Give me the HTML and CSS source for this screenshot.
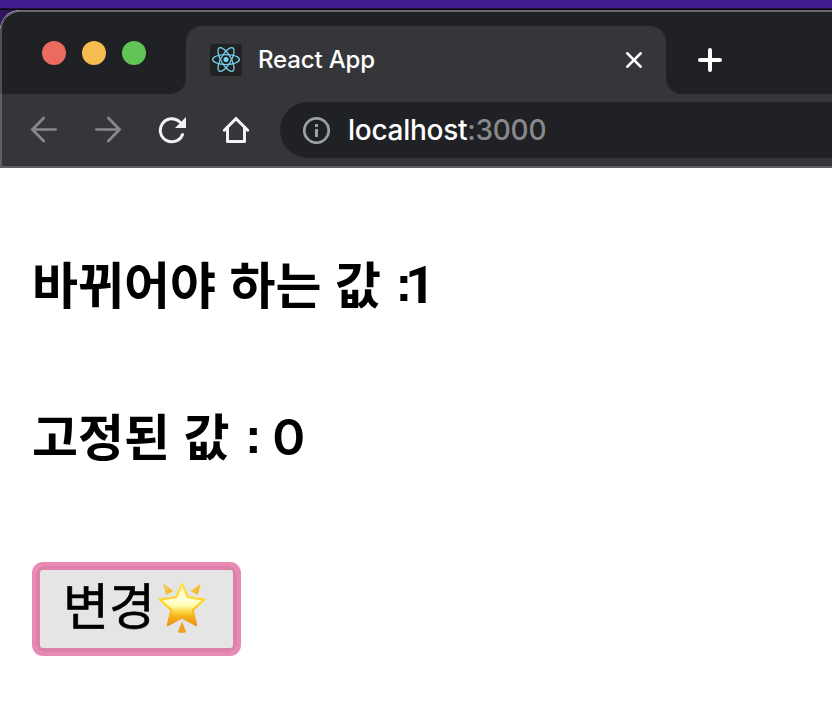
FILE: index.html
```html
<!DOCTYPE html>
<html lang="ko">
<head>
<meta charset="utf-8">
<title>React App</title>
<link rel="stylesheet" href="styles.css">
</head>
<body>
<div class="desktop">
<div class="window">
  <header class="tabstrip">
    <div class="lights"><i class="red"></i><i class="yellow"></i><i class="green"></i></div>
    <div class="tab">
      <svg class="favicon" width="32" height="32" viewBox="0 0 32 32" fill="none" stroke="#78d5f5" stroke-width="1.25">
        <rect width="32" height="32" rx="3" fill="#222" stroke="none"/>
        <circle cx="16" cy="15.5" r="2.5" fill="#78d5f5" stroke="none"/>
        <ellipse cx="16" cy="15.5" rx="13.4" ry="5"/>
        <ellipse cx="16" cy="15.5" rx="13.4" ry="5" transform="rotate(60 16 15.5)"/>
        <ellipse cx="16" cy="15.5" rx="13.4" ry="5" transform="rotate(120 16 15.5)"/>
      </svg>
      <span class="title">React App</span>
      <svg class="close" width="16" height="16" viewBox="0 0 16 16" stroke="#fff" stroke-width="2.7" stroke-linecap="round"><path d="M1.4 1.4 14.6 14.6M14.6 1.4 1.4 14.6"/></svg>
    </div>
    <svg class="plus" width="24" height="24" viewBox="0 0 24 24" stroke="#fff" stroke-width="4" stroke-linecap="round"><path d="M12 2V22M2 12H22"/></svg>
  </header>
  <nav class="toolbar">
    <svg width="28" height="28" viewBox="0 0 28 28" fill="none" stroke="#88898b" stroke-width="2.7" stroke-linecap="round"><path d="M25.7 13.5H2.4M13.7 2 2.4 13.5 13.7 25"/></svg>
    <svg width="28" height="28" viewBox="0 0 28 28" fill="none" stroke="#88898b" stroke-width="2.7" stroke-linecap="round"><path d="M2.3 13.5H25.6M14.3 2 25.6 13.5 14.3 25"/></svg>
    <svg width="28" height="28" viewBox="0 0 28 28" fill="none" stroke="#f1f3f4" stroke-width="3" stroke-linecap="round"><path d="M24.5 18.6A11.5 11.5 0 1 1 21.8 6"/><path d="M28 1V12H17Z" fill="#f1f3f4" stroke="none"/></svg>
    <svg width="28" height="28" viewBox="0 0 28 28" fill="none" stroke="#f1f3f4" stroke-width="3" stroke-linecap="round" stroke-linejoin="round"><path d="M5.5 12V25.5H22.5V12"/><path d="M2.3 14.2 14 2.7 25.7 14.2" stroke-linejoin="miter"/></svg>
    <div class="address">
      <svg width="28" height="28" viewBox="0 0 28 28" fill="none" stroke="#9aa0a6" stroke-width="2.8"><circle cx="14.5" cy="14.5" r="12.2"/><path d="M14.5 13V21M14.5 8V11" stroke-width="3"/></svg>
      <span class="url">localhost<span class="port">:3000</span></span>
    </div>
  </nav>
  <main class="page">
    <h1 class="changing">바뀌어야 하는 값 <span class="colon">:</span><span class="digit">1</span></h1>
    <h1 class="fixed">고정된 값 <span class="colon">:</span> <span class="digit">0</span></h1>
    <button class="change"><span class="label">변경</span><svg width="48" height="52" viewBox="0 0 48 52">
      <defs>
        <linearGradient id="star" x1="0" y1="0" x2="0" y2="1"><stop offset="0" stop-color="#ffe052"/><stop offset=".5" stop-color="#ffd426"/><stop offset="1" stop-color="#ed9412"/></linearGradient>
        <linearGradient id="glow" x1="0" y1="0" x2="0" y2="1"><stop offset="0" stop-color="#fff8a8"/><stop offset=".35" stop-color="#ffffe0"/><stop offset=".55" stop-color="#fffaa8"/><stop offset=".85" stop-color="#ffd426" stop-opacity="0"/></linearGradient>
        <linearGradient id="ray" x1="0" y1="0" x2="1" y2="1"><stop offset="0" stop-color="#ffd84d"/><stop offset="1" stop-color="#f0a91f"/></linearGradient>
      </defs>
      <g stroke-linejoin="round">
        <path d="M6 2.8 14.6 9 8.5 12.3Z" fill="url(#ray)" stroke="#f5bd35"/>
        <path d="M42 2.8 33.4 9 39.5 12.3Z" fill="url(#ray)" stroke="#f5bd35"/>
        <path d="M24 39.5 28.2 50Q24 52 19.8 50Z" fill="#eda21e"/>
        <path d="M24 1.5 30 15 46.5 17.5 34.8 28 38.2 43.2 24 35.5 9.8 43.2 13.2 28 1.5 17.5 18 15Z" fill="url(#star)" stroke="url(#star)" stroke-width="2"/>
        <path d="M24 4 29 16 43.5 18.5 33.6 27.5 36.5 41 24 34 11.5 41 14.4 27.5 4.5 18.5 19 16Z" fill="url(#glow)"/>
      </g>
    </svg></button>
  </main>
</div>
</div>
</body>
</html>
```
FILE: styles.css
```css
* { box-sizing: border-box; }
body { margin: 0; background: #fff; overflow: hidden; }
svg { display: block; flex: none; }
.desktop {
  height: 718px;
  padding-top: 10px;
  background: linear-gradient(#421b8e 0 8px, #21103e 8px 9px, #070510 9px 10px, #30145f 10px 30px, #fff 30px);
}
.window { height: 708px; border-radius: 20px 0 0 0; overflow: hidden; background: #fff; }
.tabstrip {
  height: 84px;
  display: flex;
  align-items: flex-start;
  background: #202124;
  border-top: 2px solid #69696b;
  border-left: 2px solid #505154;
  border-radius: 20px 0 0 0;
}
.lights { display: flex; gap: 16px; width: 184px; padding: 29px 0 0 40px; }
.lights i { width: 24px; height: 24px; border-radius: 50%; }
.red { background: #ed6a5f; }
.yellow { background: #f5bd4f; }
.green { background: #61c454; }
.tab {
  position: relative;
  display: flex;
  align-items: center;
  width: 480px;
  height: 68px;
  margin-top: 14px;
  padding: 0 24px;
  border-radius: 16px 16px 0 0;
  background: #35363a;
}
.tab::before, .tab::after {
  content: "";
  position: absolute;
  bottom: 0;
  width: 16px;
  height: 16px;
}
.tab::before { left: -16px; background: radial-gradient(circle at 0 0, #202124 15.5px, #35363a 16.5px); }
.tab::after { right: -16px; background: radial-gradient(circle at 100% 0, #202124 15.5px, #35363a 16.5px); }
.title {
  margin-left: 16px;
  color: #fff;
  font: 450 24px/32px Inter, "Liberation Sans", sans-serif;
  letter-spacing: -.15px;
}
.close { margin-left: auto; }
.plus { margin: 36px 0 0 32px; }
.toolbar {
  height: 74px;
  display: flex;
  align-items: center;
  gap: 36px;
  padding-left: 28px;
  background: #35363a;
  border-left: 2px solid #606164;
  border-bottom: 2px solid #606164;
}
.address {
  display: flex;
  align-items: center;
  align-self: flex-start;
  flex: 1;
  height: 56px;
  margin: 8px 0 0 -6px;
  padding-left: 22px;
  border-radius: 28px 0 0 28px;
  background: #202124;
}
.url { margin-left: 18px; color: #fff; font: 450 28px/40px Inter, "Liberation Sans", sans-serif; letter-spacing: -.27px; }
.port { color: #88898c; }
.page { padding: 76px 32px 0; color: #000; font-family: "Noto Sans CJK KR", sans-serif; }
h1 {
  height: 76px;
  margin: 0;
  font-size: 50px;
  line-height: 76px;
  font-weight: 700;
  word-spacing: -.5px;
  white-space: nowrap;
}
.changing { margin-bottom: 76px; }
.colon, .digit { display: inline-block; line-height: 50px; }
.colon { margin-left: 1px; font-family: "Liberation Sans", sans-serif; letter-spacing: -7px; vertical-align: 3px; }
.digit { font-family: Inter, sans-serif; font-weight: 600; vertical-align: 1px; }
.changing .digit { font: 700 52px/50px Roboto, sans-serif; }
.fixed .colon { margin: 0 4px 0 2px; }
.change {
  display: flex;
  align-items: center;
  width: 209px;
  height: 94px;
  margin-top: 90px;
  padding: 0 0 3px 27px;
  border: 4px solid #e889b4;
  border-radius: 11px;
  background: #e5e5e5;
  box-shadow: inset 0 0 0 4px #dd80aa;
  color: #000;
  font: 50px/74px "Noto Sans CJK KR", sans-serif;
}
.label { margin: -9px 3px 0 0; -webkit-text-stroke: .6px #000; }
```
